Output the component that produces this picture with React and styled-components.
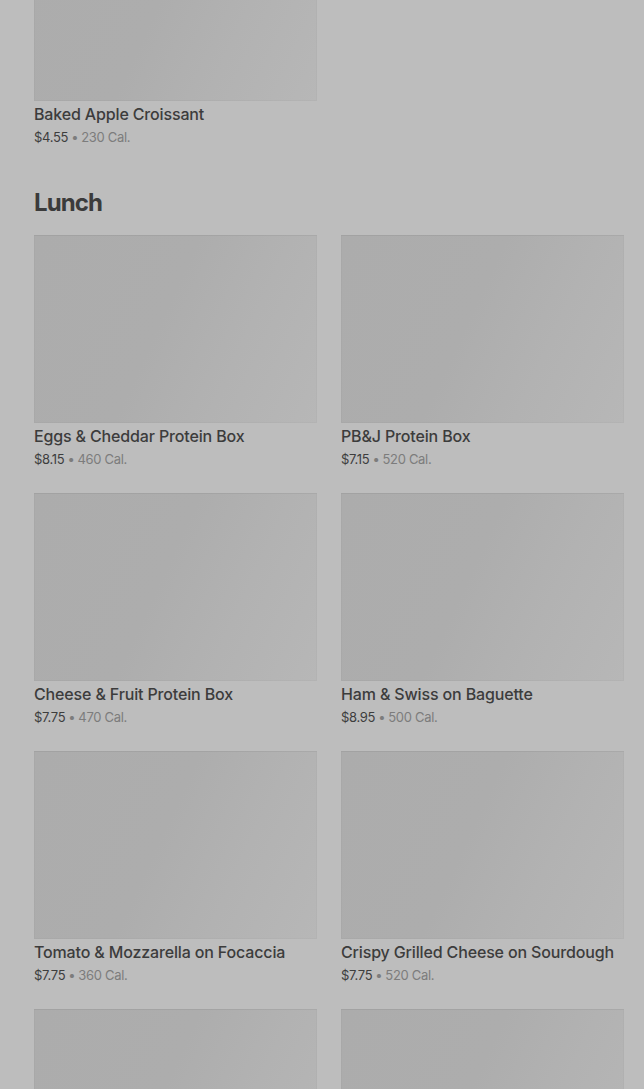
import React from "react";
import styled, { createGlobalStyle } from "styled-components";

const Global = createGlobalStyle`
  html, body { margin: 0; padding: 0; background: #bdbdbd; }
  body { font-family: Inter, "Noto Sans", Roboto, sans-serif; overflow: hidden; }
`;

const Page = styled.main`
  width: 644px;
  height: 1089px;
  overflow: hidden;
  background: #bdbdbd;
  box-sizing: border-box;
  padding: 0 20px 0 34px;
`;

const Scroller = styled.div`
  margin-top: -87px;
`;

const Section = styled.section`
  display: flex;
  flex-direction: column;
  margin-bottom: ${(p) => p.$gap || 40}px;
`;

const SectionTitle = styled.h2`
  margin: 0 0 16px;
  font-size: 24px;
  line-height: 32px;
  font-weight: 700;
  color: #3b3b3b;
  letter-spacing: -0.9px;
`;

const Grid = styled.div`
  display: grid;
  grid-template-columns: 283px 283px;
  column-gap: 24px;
  row-gap: 24px;
`;

const Card = styled.article`
  display: flex;
  flex-direction: column;
`;

const Thumb = styled.div`
  height: 188px;
  background: linear-gradient(115deg, #acacac 0%, #adadad 45%, #b2b2b2 70%, #b7b7b7 100%);
  box-shadow: inset 0 1px 0 rgba(0, 0, 0, 0.03), inset 0 0 0 1px rgba(0, 0, 0, 0.02);
`;

const Name = styled.div`
  margin-top: 3px;
  font-size: 16px;
  line-height: 20px;
  font-weight: 500;
  color: #3c3c3c;
  letter-spacing: -0.15px;
  white-space: nowrap;
`;

const Meta = styled.div`
  margin-top: 3px;
  font-size: 13px;
  line-height: 20px;
  color: #7c7c7c;
  letter-spacing: -0.3px;
  white-space: nowrap;
`;

const Price = styled.span`
  color: #3d3d3d;
`;

const Dot = styled.span`
  margin: 0 3px;
  color: #7c7c7c;
`;

function Item({ name, price, cal }) {
  return (
    <Card>
      <Thumb />
      {name && (
        <>
          <Name>{name}</Name>
          <Meta>
            <Price>{price}</Price>
            <Dot>•</Dot>
            {cal}
          </Meta>
        </>
      )}
    </Card>
  );
}

const lunch = [
  { id: 1, name: "Eggs & Cheddar Protein Box", price: "$8.15", cal: "460 Cal." },
  { id: 2, name: "PB&J Protein Box", price: "$7.15", cal: "520 Cal." },
  { id: 3, name: "Cheese & Fruit Protein Box", price: "$7.75", cal: "470 Cal." },
  { id: 4, name: "Ham & Swiss on Baguette", price: "$8.95", cal: "500 Cal." },
  { id: 5, name: "Tomato & Mozzarella on Focaccia", price: "$7.75", cal: "360 Cal." },
  { id: 6, name: "Crispy Grilled Cheese on Sourdough", price: "$7.75", cal: "520 Cal." },
  { id: 7 },
  { id: 8 },
];

export default function App() {
  return (
    <>
      <Global />
      <Page>
        <Scroller>
          <Section $gap={40}>
            <Grid>
              <Item name="Baked Apple Croissant" price="$4.55" cal="230 Cal." />
            </Grid>
          </Section>
          <Section>
            <SectionTitle>Lunch</SectionTitle>
            <Grid>
              {lunch.map((it) => (
                <Item key={it.id} {...it} />
              ))}
            </Grid>
          </Section>
        </Scroller>
      </Page>
    </>
  );
}
